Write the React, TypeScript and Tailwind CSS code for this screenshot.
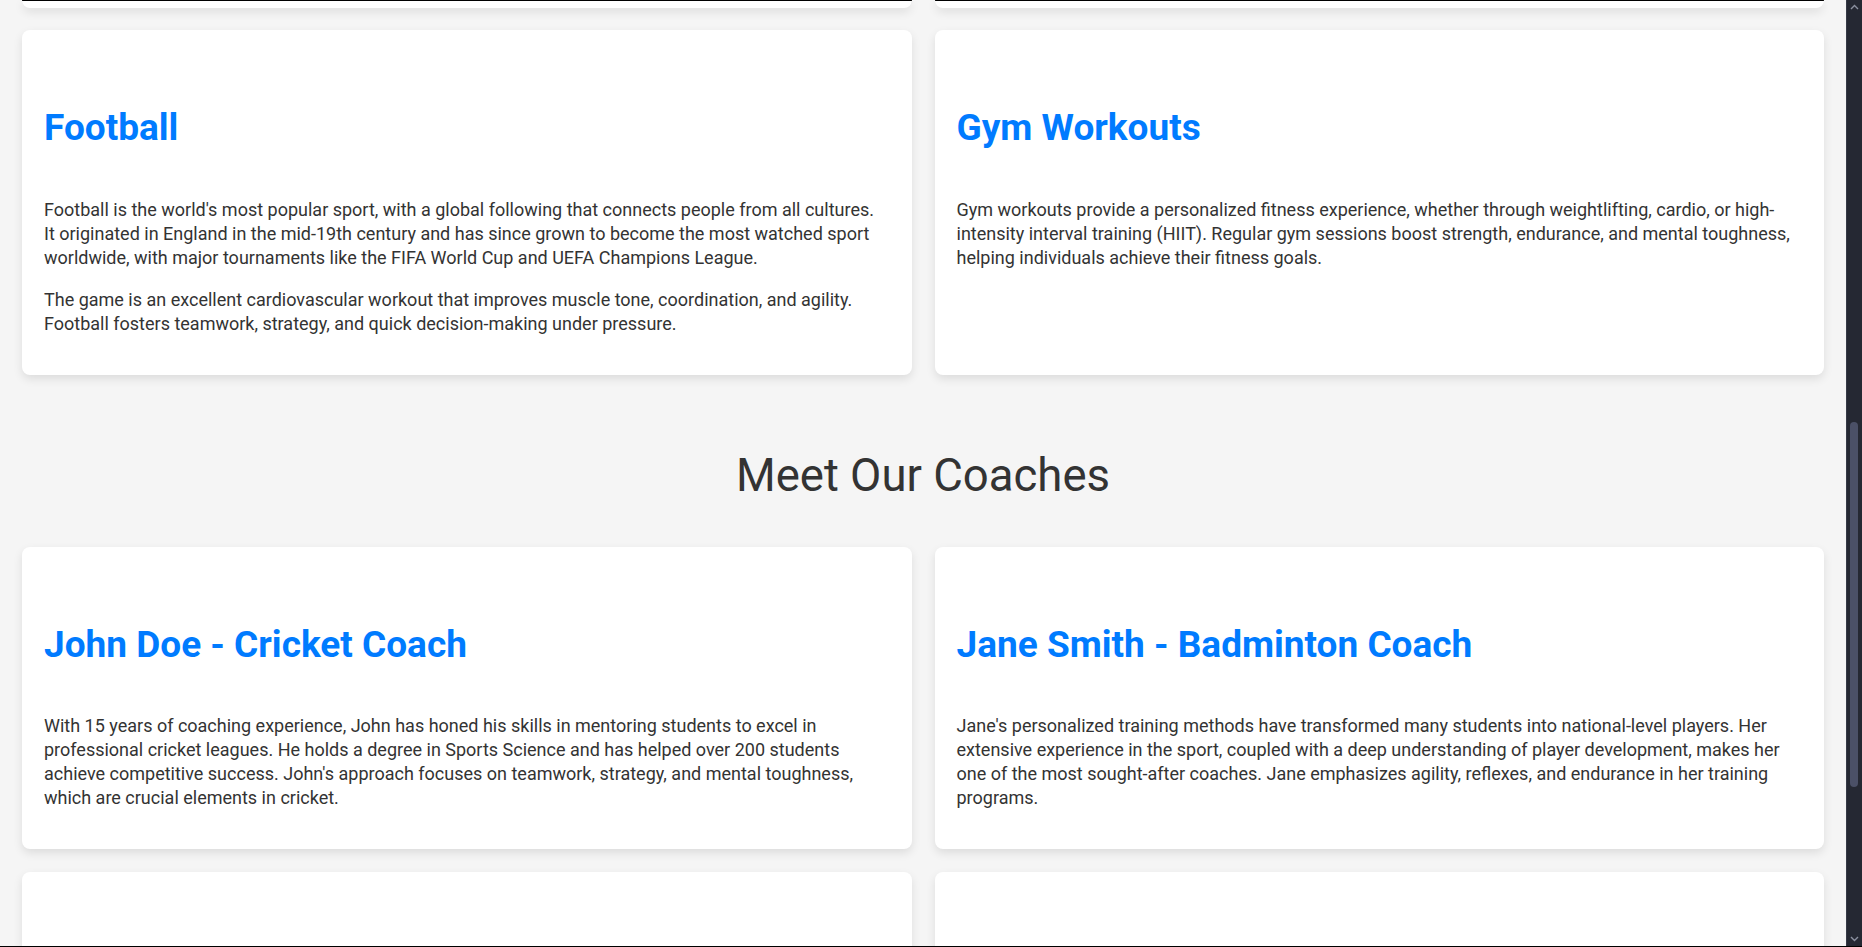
import React from "react";

type CardProps = { title?: string; paragraphs?: string[]; empty?: boolean; coach?: boolean };

function Card({ title, paragraphs = [], empty, coach }: CardProps) {
  if (empty) {
    return <div className="h-[300px] bg-white rounded-lg shadow-[0_4px_10px_rgba(0,0,0,0.1)]" />;
  }
  return (
    <div className="bg-white rounded-lg shadow-[0_4px_10px_rgba(0,0,0,0.1)] pt-[76px] pl-[22px] pr-[26px] pb-[39px]">
      <h3 className="text-[37px] leading-[44px] font-bold text-[#007bff]">{title}</h3>
      <div className={coach ? "mt-[47px] flex flex-col gap-[18px]" : "mt-[48px] flex flex-col gap-[18px]"}>
        {paragraphs.map((p, i) => (
          <p key={i} className="text-[18px] leading-[24px] text-[#333333]">
            {p}
          </p>
        ))}
      </div>
    </div>
  );
}

export default function App() {
  return (
    <div className="relative flex h-[947px] overflow-hidden bg-[#f5f5f5] font-[Roboto,sans-serif]">
      <main className="flex-1 min-w-0 px-[22px]">
        <div className="grid grid-cols-2 gap-x-[23px]">
          <div className="h-[8px] bg-white border-t border-black rounded-b-lg shadow-[0_4px_10px_rgba(0,0,0,0.1)]" />
          <div className="h-[8px] bg-white border-t border-black rounded-b-lg shadow-[0_4px_10px_rgba(0,0,0,0.1)]" />
        </div>

        <div className="mt-[22px] grid grid-cols-2 gap-[23px]">
          <Card
            title="Football"
            paragraphs={[
              "Football is the world's most popular sport, with a global following that connects people from all cultures. It originated in England in the mid-19th century and has since grown to become the most watched sport worldwide, with major tournaments like the FIFA World Cup and UEFA Champions League.",
              "The game is an excellent cardiovascular workout that improves muscle tone, coordination, and agility. Football fosters teamwork, strategy, and quick decision-making under pressure.",
            ]}
          />
          <Card
            title="Gym Workouts"
            paragraphs={[
              "Gym workouts provide a personalized fitness experience, whether through weightlifting, cardio, or high-intensity interval training (HIIT). Regular gym sessions boost strength, endurance, and mental toughness, helping individuals achieve their fitness goals.",
            ]}
          />
        </div>

        <h2 className="mt-[74px] mb-[44px] text-center text-[45.5px] leading-[54px] font-normal text-[#333333]">
          Meet Our Coaches
        </h2>

        <div className="grid grid-cols-2 gap-[23px]">
          <Card
            coach
            title="John Doe - Cricket Coach"
            paragraphs={[
              "With 15 years of coaching experience, John has honed his skills in mentoring students to excel in professional cricket leagues. He holds a degree in Sports Science and has helped over 200 students achieve competitive success. John's approach focuses on teamwork, strategy, and mental toughness, which are crucial elements in cricket.",
            ]}
          />
          <Card
            coach
            title="Jane Smith - Badminton Coach"
            paragraphs={[
              "Jane's personalized training methods have transformed many students into national-level players. Her extensive experience in the sport, coupled with a deep understanding of player development, makes her one of the most sought-after coaches. Jane emphasizes agility, reflexes, and endurance in her training programs.",
            ]}
          />
          <Card empty />
          <Card empty />
        </div>
      </main>

      <aside className="relative w-[16px] shrink-0 bg-[#252833] border-l border-[#363a47]">
        <svg className="absolute left-[3px] top-[4px]" width="9" height="6" viewBox="0 0 9 6">
          <path d="M1 5 L4.5 1.5 L8 5" fill="none" stroke="#8b90a0" strokeWidth="1.4" />
        </svg>
        <div className="absolute left-[3px] top-[422px] h-[365px] w-[8px] rounded-full bg-[#4b5067]" />
        <svg className="absolute left-[3px] bottom-[5px]" width="9" height="6" viewBox="0 0 9 6">
          <path d="M1 1 L4.5 4.5 L8 1" fill="none" stroke="#8b90a0" strokeWidth="1.4" />
        </svg>
      </aside>

      <div className="absolute bottom-0 left-0 right-0 h-px bg-black" />
    </div>
  );
}
